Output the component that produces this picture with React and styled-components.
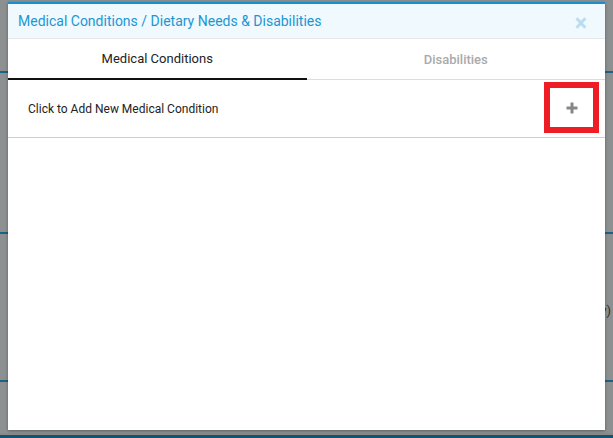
import React from 'react'
import styled, { createGlobalStyle } from 'styled-components'

const GlobalStyle = createGlobalStyle`
  html, body {
    margin: 0;
    padding: 0;
    background: #8d9091;
    font-family: Roboto, "Liberation Sans", Arial, sans-serif;
  }
`

const Page = styled.div`
  position: relative;
  width: 613px;
  height: 438px;
  overflow: hidden;
  background: #8d9091;
  display: flex;
  flex-direction: column;
`

const Band = styled.div`
  height: ${p => p.h}px;
  flex-shrink: 0;
  background: #8d9091;
  display: flex;
  justify-content: flex-end;
  align-items: center;
`

const BgLine = styled.div`
  height: 2px;
  flex-shrink: 0;
  background: #1e6184;
`

const BgText = styled.span`
  font-size: 13px;
  color: #2b2b2b;
  margin-right: 2px;
`

const FooterBar = styled.div`
  flex: 1;
  background: #0d5475;
  border-top: 2px solid #8a8a8a;
`

const Modal = styled.div`
  position: absolute;
  top: 2px;
  left: 8px;
  width: 597px;
  height: 428px;
  background: #fff;
  border-top: 2px solid #1a8fce;
  box-sizing: border-box;
  box-shadow: 0 1px 3px rgba(0, 0, 0, 0.35);
  display: flex;
  flex-direction: column;
`

const Header = styled.div`
  height: 34px;
  background: #f0f9fd;
  border-bottom: 1px solid #e4e8ea;
  display: flex;
  align-items: center;
  justify-content: space-between;
  padding: 0 18px 0 10px;
`

const Title = styled.h4`
  margin: 0;
  font-size: 14px;
  font-weight: 400;
  color: #1b96d4;
`

const Close = styled.span`
  font-size: 23px;
  font-weight: 700;
  color: #b7def0;
  line-height: 1;
  margin-top: 5px;
`

const Tabs = styled.div`
  display: flex;
  height: 40px;
  border-bottom: 1px solid #dcdcdc;
`

const Tab = styled.div`
  flex: 1;
  display: flex;
  align-items: center;
  justify-content: center;
  font-size: 13px;
  font-weight: ${p => (p.active ? 400 : 500)};
  color: ${p => (p.active ? '#222' : '#aaa')};
  margin-bottom: ${p => (p.active ? '-1px' : '0')};
  border-bottom: ${p => (p.active ? '2px solid #111' : 'none')};
`

const Row = styled.div`
  height: 57px;
  border-bottom: 1px solid #cfcfcf;
  display: flex;
  align-items: center;
  justify-content: space-between;
  padding: 0 6px 0 20px;
`

const RowLabel = styled.span`
  font-size: 12px;
  color: #222;
`

const AddButton = styled.button`
  width: 55px;
  height: 51px;
  box-sizing: border-box;
  border: 6px solid #ee1c25;
  background: #fff;
  display: flex;
  align-items: center;
  justify-content: center;
  padding: 0;
  margin-bottom: 2px;
  cursor: pointer;
`

const Plus = () => (
  <svg width="12" height="12" viewBox="0 0 12 12">
    <path d="M6 0.5v11M0.5 6h11" stroke="#878787" strokeWidth="3" />
  </svg>
)

export default function App() {
  return (
    <>
      <GlobalStyle />
      <Page>
        <Band h={71} />
        <BgLine />
        <Band h={159} />
        <BgLine />
        <Band h={56} />
        <Band h={40}>
          <BgText>y)</BgText>
        </Band>
        <Band h={50} />
        <BgLine />
        <Band h={51} />
        <FooterBar />
        <Modal>
          <Header>
            <Title>Medical Conditions / Dietary Needs &amp; Disabilities</Title>
            <Close>×</Close>
          </Header>
          <Tabs>
            <Tab active>Medical Conditions</Tab>
            <Tab>Disabilities</Tab>
          </Tabs>
          <Row>
            <RowLabel>Click to Add New Medical Condition</RowLabel>
            <AddButton aria-label="Add">
              <Plus />
            </AddButton>
          </Row>
        </Modal>
      </Page>
    </>
  )
}
